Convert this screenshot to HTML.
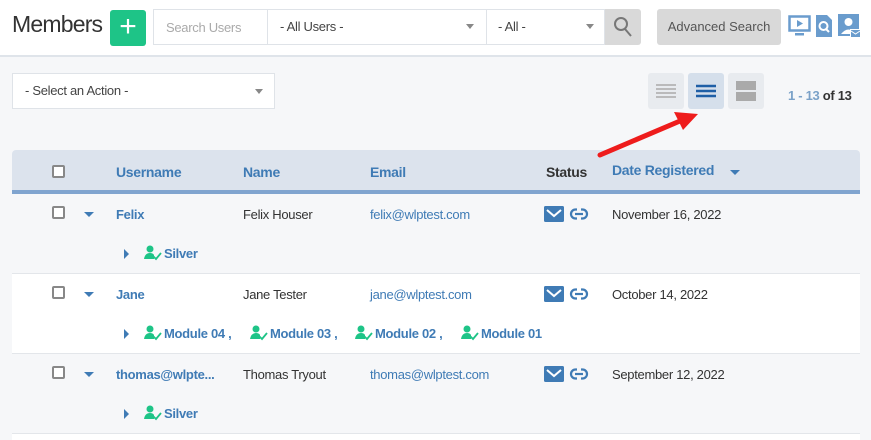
<!DOCTYPE html>
<html><head><meta charset="utf-8"><style>
*{box-sizing:border-box;margin:0;padding:0}
body{width:871px;height:438px;overflow:hidden;background:#f6f7f9;font-family:"Liberation Sans",sans-serif;position:relative;color:#333}
.a{position:absolute}
.hdr{left:0;top:0;width:871px;height:57px;background:#fff;border-bottom:2px solid #dfe4ea}
.t{font-size:13px;white-space:nowrap;letter-spacing:-0.3px}
.blue{color:#3f7bb5}
.bold{font-weight:bold}
.cb{width:13px;height:13px;border:2px solid #888;border-radius:2px;background:#fff}
.tri{width:0;height:0;border-left:5px solid transparent;border-right:5px solid transparent;border-top:5px solid #3f7bb5}
.trr{width:0;height:0;border-top:5px solid transparent;border-bottom:5px solid transparent;border-left:5px solid #3f7bb5}
.sel{border:1px solid #dfe3e8;background:#fff}
.caret{width:0;height:0;border-left:4px solid transparent;border-right:4px solid transparent;border-top:5px solid #888}
</style></head><body>
<div class="a hdr"></div>
<div class="a" style="left:12px;top:11px;font-size:23px;color:#333;letter-spacing:-0.8px">Members</div>
<div class="a" style="left:110px;top:10px;width:36px;height:36px;background:#1ec487;border-radius:3px;color:#fff;font-size:30px;line-height:34px;text-align:center">+</div>
<div class="a sel" style="left:153px;top:9px;width:452px;height:36px"></div>
<div class="a" style="left:267px;top:9px;width:1px;height:36px;background:#dfe3e8"></div>
<div class="a" style="left:486px;top:9px;width:1px;height:36px;background:#dfe3e8"></div>
<div class="a t" style="left:166px;top:20px;color:#aaa">Search Users</div>
<div class="a t" style="left:280px;top:19px;color:#444">- All Users -</div>
<div class="a caret" style="left:466px;top:24px"></div>
<div class="a t" style="left:498px;top:19px;color:#444">- All -</div>
<div class="a caret" style="left:586px;top:24px"></div>
<div class="a" style="left:605px;top:9px;width:36px;height:36px;background:#d9d9d9;border-radius:0 3px 3px 0"></div>
<svg class="a" style="left:613px;top:16px" width="20" height="22"><circle cx="8" cy="8" r="6" fill="none" stroke="#777" stroke-width="2"/><line x1="12" y1="13" x2="18" y2="20" stroke="#777" stroke-width="2"/></svg>
<div class="a" style="left:657px;top:9px;width:124px;height:36px;background:#d9d9d9;border-radius:3px;color:#555;font-size:13px;line-height:36px;text-align:center">Advanced Search</div>
<svg class="a" style="left:788px;top:14px" width="24" height="24"><rect x="1.5" y="2.5" width="20" height="14" fill="none" stroke="#6a9ccd" stroke-width="2.5"/><path d="M9 6 L15 9.5 L9 13Z" fill="#6a9ccd"/><rect x="7" y="19" width="9" height="2.5" fill="#6a9ccd"/></svg>
<svg class="a" style="left:815px;top:14px" width="18" height="24"><path d="M1 1 H12 L17 6 V23 H1Z" fill="#6a9ccd"/><circle cx="8.5" cy="12" r="4" fill="none" stroke="#fff" stroke-width="2"/><line x1="11" y1="15" x2="14" y2="18" stroke="#fff" stroke-width="2"/></svg>
<svg class="a" style="left:838px;top:14px" width="24" height="26"><rect x="0" y="0" width="21" height="22" fill="#6a9ccd"/><circle cx="10.5" cy="8" r="4" fill="#fff"/><path d="M3 20 Q10.5 11 18 20Z" fill="#fff"/><rect x="12" y="15" width="11" height="9" fill="#fff"/><rect x="13" y="16" width="9" height="7" fill="#6a9ccd"/><path d="M13 17 L17.5 20 L22 17" stroke="#fff" fill="none"/></svg>

<div class="a sel" style="left:12px;top:73px;width:263px;height:36px"></div>
<div class="a t" style="left:25px;top:83px;color:#444">- Select an Action -</div>
<div class="a caret" style="left:255px;top:89px"></div>
<div class="a" style="left:648px;top:73px;width:36px;height:36px;background:#e8ebef;border-radius:3px"></div>
<svg class="a" style="left:656px;top:82px" width="20" height="18"><g stroke="#aaa" stroke-width="1.5"><line x1="0" y1="3" x2="20" y2="3"/><line x1="0" y1="7" x2="20" y2="7"/><line x1="0" y1="11" x2="20" y2="11"/><line x1="0" y1="15" x2="20" y2="15"/></g></svg>
<div class="a" style="left:688px;top:73px;width:36px;height:36px;background:#d5dfeb;border-radius:3px"></div>
<svg class="a" style="left:696px;top:82px" width="20" height="18"><g stroke="#1f5fa6" stroke-width="2.5"><line x1="0" y1="4" x2="20" y2="4"/><line x1="0" y1="9" x2="20" y2="9"/><line x1="0" y1="14" x2="20" y2="14"/></g></svg>
<div class="a" style="left:728px;top:73px;width:36px;height:36px;background:#e8ebef;border-radius:3px"></div>
<div class="a" style="left:736px;top:81px;width:20px;height:9px;background:#aaa"></div>
<div class="a" style="left:736px;top:92px;width:20px;height:9px;background:#aaa"></div>
<div class="a t" style="left:788px;top:88px;font-weight:bold;color:#333"><span style="color:#7aa1c8">1 - 13</span> of 13</div>

<div class="a" style="left:12px;top:150px;width:848px;height:290px;background:#fff;border-radius:4px 4px 0 0"></div>
<div class="a" style="left:12px;top:150px;width:848px;height:40px;background:#dce3ed;border-radius:4px 4px 0 0"></div>
<div class="a" style="left:12px;top:190px;width:848px;height:4px;background:#80a4cf"></div>
<div class="a" style="left:12px;top:194px;width:848px;height:80px;background:#f6f7f9;border-bottom:1px solid #e3e6ea"></div>
<div class="a" style="left:12px;top:274px;width:848px;height:80px;background:#fff;border-bottom:1px solid #e3e6ea"></div>
<div class="a" style="left:12px;top:354px;width:848px;height:80px;background:#f6f7f9;border-bottom:1px solid #e3e6ea"></div>

<div class="a cb" style="left:52px;top:165px"></div>
<div class="a t bold blue" style="left:116px;top:164px;font-size:14px">Username</div>
<div class="a t bold blue" style="left:243px;top:164px;font-size:14px">Name</div>
<div class="a t bold blue" style="left:370px;top:164px;font-size:14px">Email</div>
<div class="a t bold" style="left:546px;top:164px;font-size:14px;color:#333">Status</div>
<div class="a t bold blue" style="left:612px;top:162px;font-size:14px">Date Registered</div>
<div class="a tri" style="left:730px;top:170px"></div>

<div class="a cb" style="left:52px;top:206px"></div><div class="a tri" style="left:84px;top:212px"></div>
<div class="a t bold blue" style="left:116px;top:207px">Felix</div>
<div class="a t" style="left:243px;top:207px">Felix Houser</div>
<div class="a t blue" style="left:370px;top:207px">felix@wlptest.com</div>
<div class="a t" style="left:612px;top:207px">November 16, 2022</div>
<div class="a trr" style="left:124px;top:249px"></div>
<div class="a t bold blue" style="left:164px;top:246px">Silver</div>

<div class="a cb" style="left:52px;top:286px"></div><div class="a tri" style="left:84px;top:292px"></div>
<div class="a t bold blue" style="left:116px;top:287px">Jane</div>
<div class="a t" style="left:243px;top:287px">Jane Tester</div>
<div class="a t blue" style="left:370px;top:287px">jane@wlptest.com</div>
<div class="a t" style="left:612px;top:287px">October 14, 2022</div>
<div class="a trr" style="left:124px;top:329px"></div>
<div class="a t bold blue" style="left:164px;top:326px">Module 04 ,</div>
<div class="a t bold blue" style="left:270px;top:326px">Module 03 ,</div>
<div class="a t bold blue" style="left:375px;top:326px">Module 02 ,</div>
<div class="a t bold blue" style="left:481px;top:326px">Module 01</div>

<div class="a cb" style="left:52px;top:366px"></div><div class="a tri" style="left:84px;top:372px"></div>
<div class="a t bold blue" style="left:116px;top:367px">thomas@wlpte...</div>
<div class="a t" style="left:243px;top:367px">Thomas Tryout</div>
<div class="a t blue" style="left:370px;top:367px">thomas@wlptest.com</div>
<div class="a t" style="left:612px;top:367px">September 12, 2022</div>
<div class="a trr" style="left:124px;top:409px"></div>
<div class="a t bold blue" style="left:164px;top:406px">Silver</div>

<svg class="a" style="left:0;top:0" width="871" height="438">
<defs>
<g id="st"><rect x="0" y="0" width="20" height="16" rx="1.5" fill="#3f7bb5"/><path d="M3 4 L10 10 L17 4" stroke="#fff" stroke-width="2" fill="none"/>
<path d="M33 3.5 H31.5 A4.5 4.5 0 0 0 31.5 12.5 H33 M37 3.5 H38.5 A4.5 4.5 0 0 1 38.5 12.5 H37" fill="none" stroke="#3f7bb5" stroke-width="2.2"/><line x1="31" y1="8" x2="39" y2="8" stroke="#3f7bb5" stroke-width="2.2"/></g>
<g id="mi"><circle cx="6" cy="4" r="3.5" fill="#1ec487"/><path d="M0 14 Q1 8 6 8 Q9 8 10 10 L10 14Z" fill="#1ec487"/><path d="M9 11 L12 14 L17 8" stroke="#1ec487" stroke-width="1.8" fill="none"/></g>
</defs>
<use href="#st" x="544" y="206"/><use href="#st" x="544" y="286"/><use href="#st" x="544" y="366"/>
<use href="#mi" x="144" y="245"/>
<use href="#mi" x="144" y="325"/><use href="#mi" x="250" y="325"/><use href="#mi" x="355" y="325"/><use href="#mi" x="461" y="325"/>
<use href="#mi" x="144" y="405"/>
<line x1="600" y1="155" x2="680" y2="121" stroke="#ee1c1c" stroke-width="5" stroke-linecap="round"/>
<path d="M698 114 L674 112 L683 130Z" fill="#ee1c1c"/>
</svg>
</body></html>
